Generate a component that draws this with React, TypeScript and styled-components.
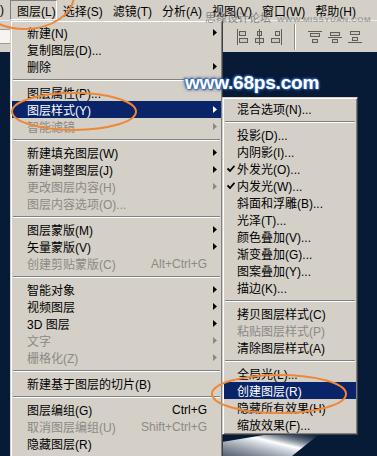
import React from 'react';
import styled, { createGlobalStyle } from 'styled-components';

const GlobalStyle = createGlobalStyle`
  html, body { margin: 0; padding: 0; background: #071a36; overflow: hidden; }
  body { font-family: "Liberation Sans", "Noto Sans CJK SC", sans-serif; font-size: 12px; }
`;

const Screen = styled.div`
  position: relative;
  width: 377px;
  height: 456px;
  overflow: hidden;
  display: flex;
  flex-direction: column;
  background: #071a36;
`;

const MenuBar = styled.div`
  height: 20px;
  flex: none;
  display: flex;
  align-items: stretch;
  background: #d4d0c8;
  color: #000;
  font-size: 12px;
`;

const BarStub = styled.span`
  display: flex;
  align-items: center;
  width: 10px;
`;

const BarItem = styled.span<{ $active?: boolean }>`
  display: flex;
  align-items: center;
  box-sizing: border-box;
  white-space: nowrap;
  padding: ${p => (p.$active ? '0 0 0 6px' : '0 4px 0 6px')};
  border: ${p => (p.$active ? '1px solid' : 'none')};
  border-color: #808080 #ffffff #ffffff #808080;
`;

const OptionsBar = styled.div`
  height: 32px;
  flex: none;
  display: flex;
  align-items: center;
  background: #d4d0c8;
  border-top: 1px solid #eeece8;
  box-sizing: border-box;
`;

const Field = styled.div`
  width: 10px;
  height: 15px;
  background: #f5f4f1;
  border-top: 1px solid #9c9a95;
  border-bottom: 1px solid #9c9a95;
  box-sizing: border-box;
`;

const AlignGroup = styled.div<{ $ml: number }>`
  display: flex;
  align-items: center;
  gap: 6px;
  margin-left: ${p => p.$ml}px;
`;

const BarDivider = styled.div`
  width: 1px;
  height: 26px;
  background: #8f8c86;
  border-right: 1px solid #ffffff;
  margin-left: 12px;
`;

const Canvas = styled.div`
  flex: 1;
  position: relative;
  background: #071a36;
`;

const Beam = styled.svg`
  position: absolute;
  left: 222px;
  bottom: 0;
  width: 155px;
  height: 24px;
`;

const Watermark = styled.div`
  position: absolute;
  left: 205px;
  top: 9px;
  display: flex;
  align-items: baseline;
  gap: 6px;
  color: rgba(110, 110, 110, 0.8);
  white-space: nowrap;
  pointer-events: none;
  z-index: 5;
`;

const WmCn = styled.span`
  font-size: 11px;
`;

const WmEn = styled.span`
  font-size: 8px;
  font-weight: bold;
  letter-spacing: 0.4px;
  color: rgba(150, 150, 150, 0.85);
`;

const SiteLogo = styled.div`
  position: absolute;
  left: 185px;
  top: 73px;
  font-family: "Liberation Sans", Arial, sans-serif;
  font-weight: bold;
  font-size: 19px;
  line-height: 19px;
  color: #ffffff;
  letter-spacing: -0.2px;
  text-shadow: 0 0 1px #3d70bb, 0 0 2px #3d70bb, 1px 1px 2px #2a5aa5, -1px -1px 2px #2a5aa5,
    0 0 4px #1c3f7c;
  z-index: 4;
  pointer-events: none;
`;

const Menu = styled.div<{ $left: number; $top: number; $width: number; $pt: number }>`
  position: absolute;
  left: ${p => p.$left}px;
  top: ${p => p.$top}px;
  width: ${p => p.$width}px;
  box-sizing: border-box;
  background: #d4d0c8;
  border: 1px solid;
  border-color: #d4d0c8 #404040 #404040 #d4d0c8;
  box-shadow: inset 1px 1px #ffffff, inset -1px -1px #808080;
  padding: ${p => p.$pt}px 1px 1px 1px;
  z-index: 3;
`;

const Item = styled.div<{ $active?: boolean; $disabled?: boolean }>`
  height: 17px;
  display: flex;
  align-items: center;
  white-space: nowrap;
  background: ${p => (p.$active ? '#0a246a' : 'transparent')};
  color: ${p => (p.$active ? '#ffffff' : p.$disabled ? '#8c8984' : '#000000')};
`;

const Lead = styled.span<{ $w: number }>`
  width: ${p => p.$w}px;
  flex: none;
  display: flex;
  align-items: center;
  justify-content: center;
`;

const Label = styled.span`
  flex: 1;
`;

const Shortcut = styled.span`
  flex: none;
`;

const ArrowCell = styled.span`
  width: 14px;
  flex: none;
  display: flex;
  align-items: center;
  padding-left: 6px;
  box-sizing: border-box;
`;

const Sep = styled.div`
  height: 9px;
  display: flex;
  align-items: center;
  padding: 0 1px;
`;

const SepLine = styled.div`
  flex: 1;
  border-top: 1px solid #808080;
  border-bottom: 1px solid #ffffff;
`;

const Overlay = styled.svg`
  position: absolute;
  left: 0;
  top: 0;
  width: 377px;
  height: 456px;
  pointer-events: none;
  z-index: 10;
`;

type Entry = {
  label?: string;
  shortcut?: string;
  arrow?: boolean;
  disabled?: boolean;
  active?: boolean;
  checked?: boolean;
  sep?: boolean;
};

const mainItems: Entry[] = [
  { label: '新建(N)', arrow: true },
  { label: '复制图层(D)...' },
  { label: '删除', arrow: true },
  { sep: true },
  { label: '图层属性(P)...' },
  { label: '图层样式(Y)', arrow: true, active: true },
  { label: '智能滤镜', arrow: true, disabled: true },
  { sep: true },
  { label: '新建填充图层(W)', arrow: true },
  { label: '新建调整图层(J)', arrow: true },
  { label: '更改图层内容(H)', arrow: true, disabled: true },
  { label: '图层内容选项(O)...', disabled: true },
  { sep: true },
  { label: '图层蒙版(M)', arrow: true },
  { label: '矢量蒙版(V)', arrow: true },
  { label: '创建剪贴蒙版(C)', shortcut: 'Alt+Ctrl+G', disabled: true },
  { sep: true },
  { label: '智能对象', arrow: true },
  { label: '视频图层', arrow: true },
  { label: '3D 图层', arrow: true },
  { label: '文字', arrow: true, disabled: true },
  { label: '栅格化(Z)', arrow: true, disabled: true },
  { sep: true },
  { label: '新建基于图层的切片(B)' },
  { sep: true },
  { label: '图层编组(G)', shortcut: 'Ctrl+G' },
  { label: '取消图层编组(U)', shortcut: 'Shift+Ctrl+G', disabled: true },
  { label: '隐藏图层(R)' },
  { sep: true },
];

const subItems: Entry[] = [
  { label: '混合选项(N)...' },
  { sep: true },
  { label: '投影(D)...' },
  { label: '内阴影(I)...' },
  { label: '外发光(O)...', checked: true },
  { label: '内发光(W)...', checked: true },
  { label: '斜面和浮雕(B)...' },
  { label: '光泽(T)...' },
  { label: '颜色叠加(V)...' },
  { label: '渐变叠加(G)...' },
  { label: '图案叠加(Y)...' },
  { label: '描边(K)...' },
  { sep: true },
  { label: '拷贝图层样式(C)' },
  { label: '粘贴图层样式(P)', disabled: true },
  { label: '清除图层样式(A)' },
  { sep: true },
  { label: '全局光(L)...' },
  { label: '创建图层(R)', active: true },
  { label: '隐藏所有效果(H)' },
  { label: '缩放效果(F)...' },
];

const Arrow = ({ color }: { color: string }) => (
  <svg width="4" height="7" viewBox="0 0 4 7">
    <polygon points="0,0 4,3.5 0,7" fill={color} />
  </svg>
);

const Check = () => (
  <svg width="8" height="7" viewBox="0 0 8 7">
    <path d="M0.5 3.5 L3 6 L7.5 0.8" fill="none" stroke="#000" strokeWidth="1.8" />
  </svg>
);

const MenuList = ({ items, lead, withArrow }: { items: Entry[]; lead: number; withArrow: boolean }) => (
  <>
    {items.map((it, i) =>
      it.sep ? (
        <Sep key={i}>
          <SepLine />
        </Sep>
      ) : (
        <Item key={i} $active={it.active} $disabled={it.disabled}>
          <Lead $w={lead}>{it.checked ? <Check /> : null}</Lead>
          <Label>{it.label}</Label>
          {it.shortcut ? <Shortcut>{it.shortcut}</Shortcut> : null}
          {withArrow ? (
            <ArrowCell>
              {it.arrow ? (
                <Arrow color={it.active ? '#ffffff' : it.disabled ? '#8c8984' : '#000000'} />
              ) : null}
            </ArrowCell>
          ) : null}
        </Item>
      )
    )}
  </>
);

const AlignIcon = ({ kind }: { kind: string }) => {
  const c = '#5e5d5a';
  const f = '#c9c6bf';
  if (kind === 'l')
    return (
      <svg width="11" height="16" viewBox="0 0 11 16">
        <line x1="0.5" y1="0" x2="0.5" y2="16" stroke={c} />
        <rect x="2.5" y="2.5" width="6" height="4" fill={f} stroke={c} />
        <rect x="2.5" y="9.5" width="8" height="4" fill={f} stroke={c} />
      </svg>
    );
  if (kind === 'c')
    return (
      <svg width="11" height="16" viewBox="0 0 11 16">
        <rect x="3.5" y="2.5" width="4" height="4" fill={f} stroke={c} />
        <rect x="1.5" y="9.5" width="8" height="4" fill={f} stroke={c} />
        <line x1="5.5" y1="0" x2="5.5" y2="16" stroke={c} />
      </svg>
    );
  if (kind === 'r')
    return (
      <svg width="11" height="16" viewBox="0 0 11 16">
        <line x1="10.5" y1="0" x2="10.5" y2="16" stroke={c} />
        <rect x="4.5" y="2.5" width="4" height="4" fill={f} stroke={c} />
        <rect x="0.5" y="9.5" width="8" height="4" fill={f} stroke={c} />
      </svg>
    );
  if (kind === 't')
    return (
      <svg width="14" height="14" viewBox="0 0 14 14">
        <line x1="0" y1="1.5" x2="14" y2="1.5" stroke={c} />
        <rect x="2.5" y="3.5" width="9" height="3" fill={f} stroke={c} />
        <rect x="4.5" y="9.5" width="5" height="3" fill={f} stroke={c} />
      </svg>
    );
  if (kind === 'm')
    return (
      <svg width="14" height="14" viewBox="0 0 14 14">
        <rect x="2.5" y="2.5" width="9" height="3" fill={f} stroke={c} />
        <line x1="0" y1="7.5" x2="14" y2="7.5" stroke={c} />
        <rect x="4.5" y="9.5" width="5" height="3" fill={f} stroke={c} />
      </svg>
    );
  return (
    <svg width="14" height="14" viewBox="0 0 14 14">
      <rect x="2.5" y="1.5" width="9" height="3" fill={f} stroke={c} />
      <rect x="4.5" y="7.5" width="5" height="3" fill={f} stroke={c} />
      <line x1="0" y1="12.5" x2="14" y2="12.5" stroke={c} />
    </svg>
  );
};

export default function App() {
  return (
    <>
      <GlobalStyle />
      <Screen>
        <MenuBar>
          <BarStub>)</BarStub>
          <BarItem $active>图层(L)</BarItem>
          <BarItem>选择(S)</BarItem>
          <BarItem>滤镜(T)</BarItem>
          <BarItem>分析(A)</BarItem>
          <BarItem>视图(V)</BarItem>
          <BarItem>窗口(W)</BarItem>
          <BarItem>帮助(H)</BarItem>
        </MenuBar>
        <OptionsBar>
          <Field />
          <AlignGroup $ml={227}>
            <AlignIcon kind="l" />
            <AlignIcon kind="c" />
            <AlignIcon kind="r" />
          </AlignGroup>
          <BarDivider />
          <AlignGroup $ml={12}>
            <AlignIcon kind="t" />
            <AlignIcon kind="m" />
            <AlignIcon kind="b" />
          </AlignGroup>
        </OptionsBar>
        <Canvas>
          <Beam viewBox="0 0 155 24">
            <defs>
              <linearGradient id="beamGrad" x1="0" y1="1" x2="1" y2="0">
                <stop offset="0" stopColor="#7a808a" stopOpacity="0.7" />
                <stop offset="0.45" stopColor="#dfe4ea" stopOpacity="0.95" />
                <stop offset="0.55" stopColor="#ffffff" stopOpacity="1" />
                <stop offset="1" stopColor="#071a36" stopOpacity="0" />
              </linearGradient>
            </defs>
            <polygon points="0,24 0,10 60,0 100,0 70,24" fill="url(#beamGrad)" />
          </Beam>
        </Canvas>

        <Watermark>
          <WmCn>思缘设计论坛</WmCn>
          <WmEn>WWW.MISSYUAN.COM</WmEn>
        </Watermark>

        <Menu $left={10} $top={20} $width={213} $pt={3}>
          <MenuList items={mainItems} lead={15} withArrow />
        </Menu>
        <Menu $left={222} $top={97} $width={136} $pt={2}>
          <MenuList items={subItems} lead={13} withArrow={false} />
        </Menu>

        <SiteLogo>www.68ps.com</SiteLogo>

        <Overlay viewBox="0 0 377 456">
          <g fill="none" stroke="#ee8736" strokeWidth="2">
            <ellipse cx="25" cy="-5" rx="49" ry="34" />
            <ellipse cx="74" cy="111.5" rx="62" ry="18.5" />
            <ellipse cx="279" cy="394" rx="67" ry="19" />
          </g>
        </Overlay>
      </Screen>
    </>
  );
}
